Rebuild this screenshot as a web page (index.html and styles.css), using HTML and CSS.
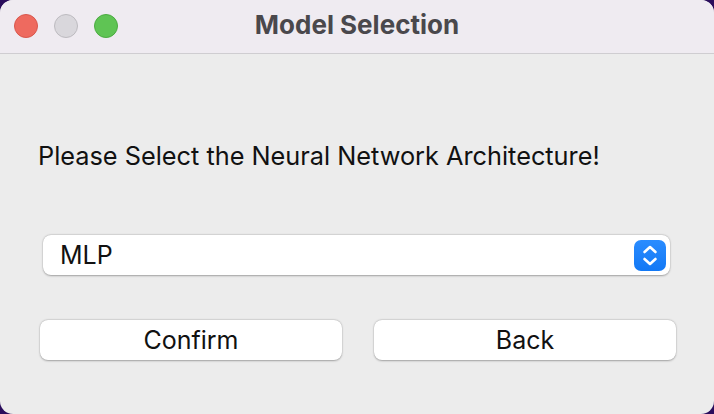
FILE: index.html
```html
<!DOCTYPE html>
<html>
<head>
<meta charset="utf-8">
<link rel="stylesheet" href="styles.css">
</head>
<body>
<div class="window">
  <div class="titlebar">
    <div class="lights">
      <span class="light red"></span>
      <span class="light gray"></span>
      <span class="light green"></span>
    </div>
    <div class="title">Model Selection</div>
  </div>
  <div class="content">
    <div class="label">Please Select the Neural Network Architecture!</div>
    <div class="select">
      <span class="select-text">MLP</span>
      <span class="stepper">
        <svg width="32" height="31" viewBox="0 0 32 31">
          <path d="M10.5 12 L16 7 L21.5 12" fill="none" stroke="#fff" stroke-width="2.6" stroke-linecap="round" stroke-linejoin="round"/>
          <path d="M10.5 19 L16 24 L21.5 19" fill="none" stroke="#fff" stroke-width="2.6" stroke-linecap="round" stroke-linejoin="round"/>
        </svg>
      </span>
    </div>
    <div class="buttons">
      <div class="btn">Confirm</div>
      <div class="btn">Back</div>
    </div>
  </div>
</div>
</body>
</html>
```

FILE: styles.css
```css
html, body {
  margin: 0;
  padding: 0;
  width: 714px;
  height: 414px;
  background: #2a0d5c;
  overflow: hidden;
}
.window {
  width: 714px;
  height: 414px;
  border-radius: 13px;
  overflow: hidden;
  background: #ececec;
  display: flex;
  flex-direction: column;
  font-family: "Inter", "Liberation Sans", sans-serif;
}
.titlebar {
  height: 53px;
  flex: none;
  background: #efebf1;
  border-bottom: 1px solid #cfcdd1;
  position: relative;
  display: flex;
  align-items: center;
  justify-content: center;
}
.lights {
  position: absolute;
  left: 14px;
  top: 14px;
  display: flex;
  gap: 16px;
}
.light {
  width: 24px;
  height: 24px;
  border-radius: 50%;
  box-sizing: border-box;
}
.red { background: #ee6a5f; border: 1px solid #d9574d; }
.gray { background: #d9d7dc; border: 1px solid #bdbbc0; }
.green { background: #5fc454; border: 1px solid #4bab41; }
.title {
  font-size: 26px;
  font-weight: 700;
  color: #4a484c;
  margin-top: -4px;
}
.content {
  flex: 1;
  display: flex;
  flex-direction: column;
  padding: 0 38px 0 38px;
}
.label {
  margin-top: 86px;
  font-size: 25.3px;
  color: #111;
  line-height: 32px;
  white-space: nowrap;
}
.select {
  margin-top: 63px;
  margin-left: 5px;
  width: 627px;
  height: 40px;
  box-sizing: border-box;
  background: #fff;
  border-radius: 8px;
  box-shadow: 0 0.5px 2px rgba(0,0,0,0.3), 0 0 0 0.5px rgba(0,0,0,0.06);
  display: flex;
  align-items: center;
  justify-content: space-between;
  padding: 0 4px 0 17px;
}
.select-text {
  font-size: 25px;
  color: #111;
}
.stepper {
  width: 32px;
  height: 31px;
  border-radius: 7px;
  background: linear-gradient(#2a8cff, #1278f5);
  display: flex;
}
.buttons {
  margin-top: 45px;
  margin-left: 2px;
  display: flex;
  gap: 32px;
}
.btn {
  width: 302px;
  height: 40px;
  background: #fff;
  border-radius: 8px;
  box-shadow: 0 0.5px 2px rgba(0,0,0,0.3), 0 0 0 0.5px rgba(0,0,0,0.06);
  display: flex;
  align-items: center;
  justify-content: center;
  font-size: 25px;
  color: #111;
}
```
